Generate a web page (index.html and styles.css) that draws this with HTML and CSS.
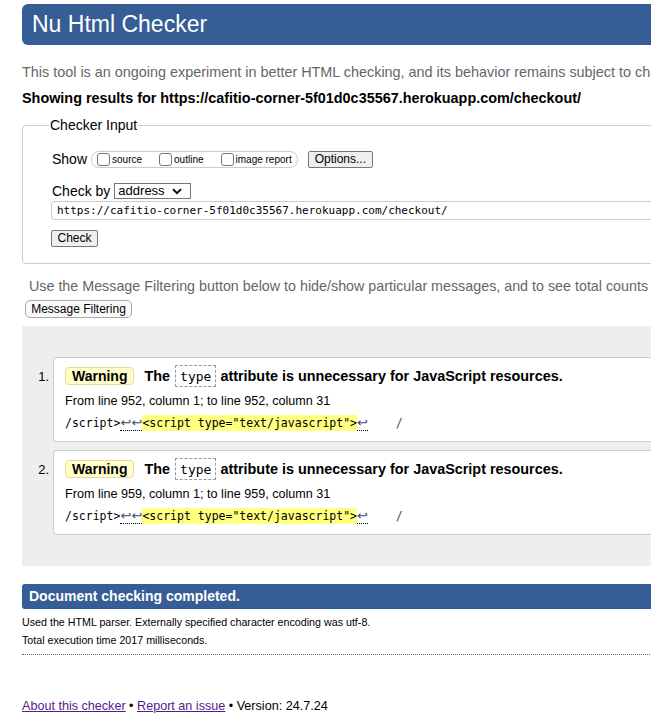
FILE: index.html
```html
<!DOCTYPE html>
<html lang="en">
<head>
<meta charset="utf-8">
<title>Nu Html Checker</title>
<link rel="stylesheet" href="styles.css">
</head>
<body>
<div class="page">
  <header class="banner"><h1>Nu Html Checker</h1></header>
  <p class="intro">This tool is an ongoing experiment in better HTML checking, and its behavior remains subject to change</p>
  <p class="showing">Showing results for https://cafitio-corner-5f01d0c35567.herokuapp.com/checkout/</p>

  <fieldset class="input-box">
    <legend>Checker Input</legend>
    <div class="row show-row">
      <span class="lbl">Show</span>
      <span class="opts">
        <span class="opt"><span class="cb"></span>source</span>
        <span class="opt"><span class="cb"></span>outline</span>
        <span class="opt"><span class="cb"></span>image report</span>
      </span>
      <span class="btn opt-btn">Options...</span>
    </div>
    <div class="row by-row">
      <span class="lbl">Check by</span>
      <span class="select">address<svg class="chev" width="10" height="7" viewBox="0 0 10 7"><path d="M1 1.2 L5 5.2 L9 1.2" fill="none" stroke="#000" stroke-width="1.8"/></svg></span>
    </div>
    <div class="url">https://cafitio-corner-5f01d0c35567.herokuapp.com/checkout/</div>
    <div class="check-row"><span class="btn">Check</span></div>
  </fieldset>

  <p class="filter-note">Use the Message Filtering button below to hide/show particular messages, and to see total counts of errors and warnings.</p>
  <span class="btn filter-btn">Message Filtering</span>

  <div class="results">
    <ol class="msgs">
      <li class="msg">
        <span class="num">1.</span>
        <div class="card">
          <p class="title"><span class="badge">Warning</span><span class="the">The</span><code class="attr">type</code><span class="rest">attribute is unnecessary for JavaScript resources.</span></p>
          <p class="loc">From line 952, column 1; to line 952, column 31</p>
          <p class="code">/script&gt;<span class="u"><span class="arr">↩</span><span class="arr">↩</span></span><mark class="hl">&lt;script type="text/javascript"&gt;</mark><span class="u"><span class="arr">↩</span></span><span class="tail">    /</span></p>
        </div>
      </li>
      <li class="msg">
        <span class="num">2.</span>
        <div class="card">
          <p class="title"><span class="badge">Warning</span><span class="the">The</span><code class="attr">type</code><span class="rest">attribute is unnecessary for JavaScript resources.</span></p>
          <p class="loc">From line 959, column 1; to line 959, column 31</p>
          <p class="code">/script&gt;<span class="u"><span class="arr">↩</span><span class="arr">↩</span></span><mark class="hl">&lt;script type="text/javascript"&gt;</mark><span class="u"><span class="arr">↩</span></span><span class="tail">    /</span></p>
        </div>
      </li>
    </ol>
  </div>

  <div class="done">Document checking completed.</div>
  <p class="small first">Used the HTML parser. Externally specified character encoding was utf-8.</p>
  <p class="small">Total execution time 2017 milliseconds.</p>
  <div class="dots"></div>

  <p class="footer"><a href="#about">About this checker</a> • <a href="#issue">Report an issue</a> • Version: 24.7.24</p>
</div>
</body>
</html>
```

FILE: styles.css
```css
html, body {
  margin: 0;
  padding: 0;
  overflow: hidden;
  background: #fff;
}

body {
  font-family: "Liberation Sans", Arial, sans-serif;
  font-size: 14px;
  color: #000;
}

.page {
  width: 1100px;
  padding: 4px 0 20px 22px;
}

.banner {
  background: #365d95;
  height: 41px;
  border-radius: 6px 0 0 6px;
  padding-left: 10px;
}

.banner h1 {
  margin: 0;
  font-size: 23px;
  font-weight: normal;
  line-height: 41px;
  color: #fff;
}

.intro {
  margin: 18px 0 0;
  line-height: 18px;
  font-size: 14.4px;
  color: #666;
}

.showing {
  margin: 8px 0 0;
  line-height: 18px;
  font-size: 14.4px;
  font-weight: bold;
}

.input-box {
  margin: 9px 0 0;
  border: 1px solid #ccc;
  border-radius: 4px;
  padding: 17px 0 17px 29px;
  min-width: 0;
}

.input-box legend {
  margin-left: -3px;
  padding: 0 1px;
  line-height: 18px;
  font-size: 14px;
}

.row {
  display: flex;
  align-items: center;
}

.show-row {
  height: 17px;
}

.lbl {
  line-height: 17px;
  white-space: nowrap;
}

.opts {
  display: flex;
  align-items: center;
  flex-shrink: 0;
  box-sizing: border-box;
  height: 17px;
  margin-left: 4px;
  padding: 0 5px 0 5px;
  border: 1px solid #ccc;
  border-radius: 8px;
  gap: 17px;
}

.opt {
  display: flex;
  align-items: flex-end;
  white-space: nowrap;
  font-size: 10px;
  line-height: 12px;
}

.cb {
  flex-shrink: 0;
  width: 11px;
  height: 11px;
  border: 1px solid #767676;
  border-radius: 3px;
  margin-right: 2px;
  background: #fff;
}

.btn {
  display: inline-block;
  box-sizing: border-box;
  background: #efefef;
  border: 1px solid #767676;
  border-radius: 2px;
  font-size: 12px;
  line-height: 15px;
  padding: 0 6px;
  color: #000;
  white-space: nowrap;
}

.opt-btn {
  flex-shrink: 0;
  margin-left: 10px;
  width: 65px;
  height: 17px;
  text-align: center;
}

.by-row {
  margin-top: 15px;
  height: 16px;
}

.select {
  display: flex;
  align-items: center;
  justify-content: space-between;
  box-sizing: border-box;
  width: 77px;
  height: 16px;
  margin-left: 4px;
  border: 1px solid #767676;
  padding: 0 8px 0 3px;
  font-size: 13px;
  line-height: 14px;
}

.url {
  margin-top: 2px;
  margin-left: -1px;
  height: 19px;
  box-sizing: border-box;
  border: 1px solid #ccc;
  border-right: none;
  border-radius: 4px 0 0 4px;
  padding-left: 5px;
  font-family: "DejaVu Sans Mono", monospace;
  font-size: 11px;
  line-height: 17px;
  color: #000;
}

.check-row {
  margin-top: 9px;
  margin-left: -1px;
  height: 17px;
}

.check-row .btn {
  height: 17px;
  width: 47px;
  text-align: center;
  padding: 0;
}

.filter-note {
  margin: 13px 0 0 7px;
  line-height: 18px;
  font-size: 14.3px;
  color: #666;
}

.filter-btn {
  margin: 5px 0 0 3px;
  height: 18px;
  width: 107px;
  text-align: center;
  padding: 0;
  line-height: 16px;
  border-radius: 5px;
  border-color: #aaa;
  background: #f9f9f9;
  vertical-align: top;
}

.results {
  margin-top: 8px;
  background: #eee;
  padding: 31px 0 31px 0;
}

.msgs {
  list-style: none;
  margin: 0;
  padding: 0;
  display: flex;
  flex-direction: column;
  gap: 8px;
}

.msg {
  display: flex;
  align-items: flex-start;
}

.num {
  width: 27px;
  text-align: right;
  padding-right: 4px;
  margin-top: 11px;
  line-height: 18px;
  font-size: 13px;
}

.card {
  flex: 1;
  background: #fff;
  border: 1px solid #ccc;
  border-right: none;
  border-radius: 4px 0 0 4px;
  padding: 7px 0 8px 11px;
}

.card p {
  margin: 0;
}

.title {
  display: flex;
  align-items: center;
  height: 22px;
  font-weight: bold;
  font-size: 14.4px;
}

.badge {
  box-sizing: border-box;
  height: 18px;
  line-height: 16px;
  padding: 0 6px;
  background: #ffffcc;
  border: 1px solid #e4dc9c;
  border-radius: 4px;
  font-size: 14px;
}

.the {
  margin-left: 10px;
}

.attr {
  box-sizing: border-box;
  height: 22px;
  margin: 0 4px 0 5px;
  padding: 0 4px;
  border: 1px dashed #999;
  font-family: "DejaVu Sans Mono", monospace;
  font-weight: normal;
  font-size: 13px;
  line-height: 22px;
}

.loc {
  margin-top: 4px !important;
  line-height: 20px;
  font-size: 12.6px;
}

.code {
  margin-top: 2px !important;
  line-height: 20px;
  font-family: "DejaVu Sans Mono", monospace;
  font-size: 11.5px;
  white-space: pre;
}

.u {
  border-bottom: 1px dotted #000;
}

.arr {
  display: inline-block;
  width: 11px;
  font-family: "DejaVu Sans", sans-serif;
  font-size: 13px;
  line-height: 16px;
  color: #3a4a70;
  text-align: center;
}

.tail {
  color: #3a4a70;
}

.hl {
  background: #ffff80;
  color: #000;
  padding: 1px 0;
}

.done {
  margin-top: 18px;
  background: #365d95;
  height: 25px;
  border-radius: 3px 0 0 3px;
  color: #fff;
  font-weight: bold;
  font-size: 14px;
  line-height: 25px;
  padding-left: 7px;
}

.small {
  margin: 0;
  font-size: 10.7px;
  line-height: 18px;
}

.small.first {
  margin-top: 4px;
}

.dots {
  margin-top: 5px;
  border-top: 1px dotted #666;
}

.footer {
  margin: 42px 0 0;
  line-height: 18px;
  font-size: 12.6px;
}

.footer a {
  color: #551a8b;
}
```
